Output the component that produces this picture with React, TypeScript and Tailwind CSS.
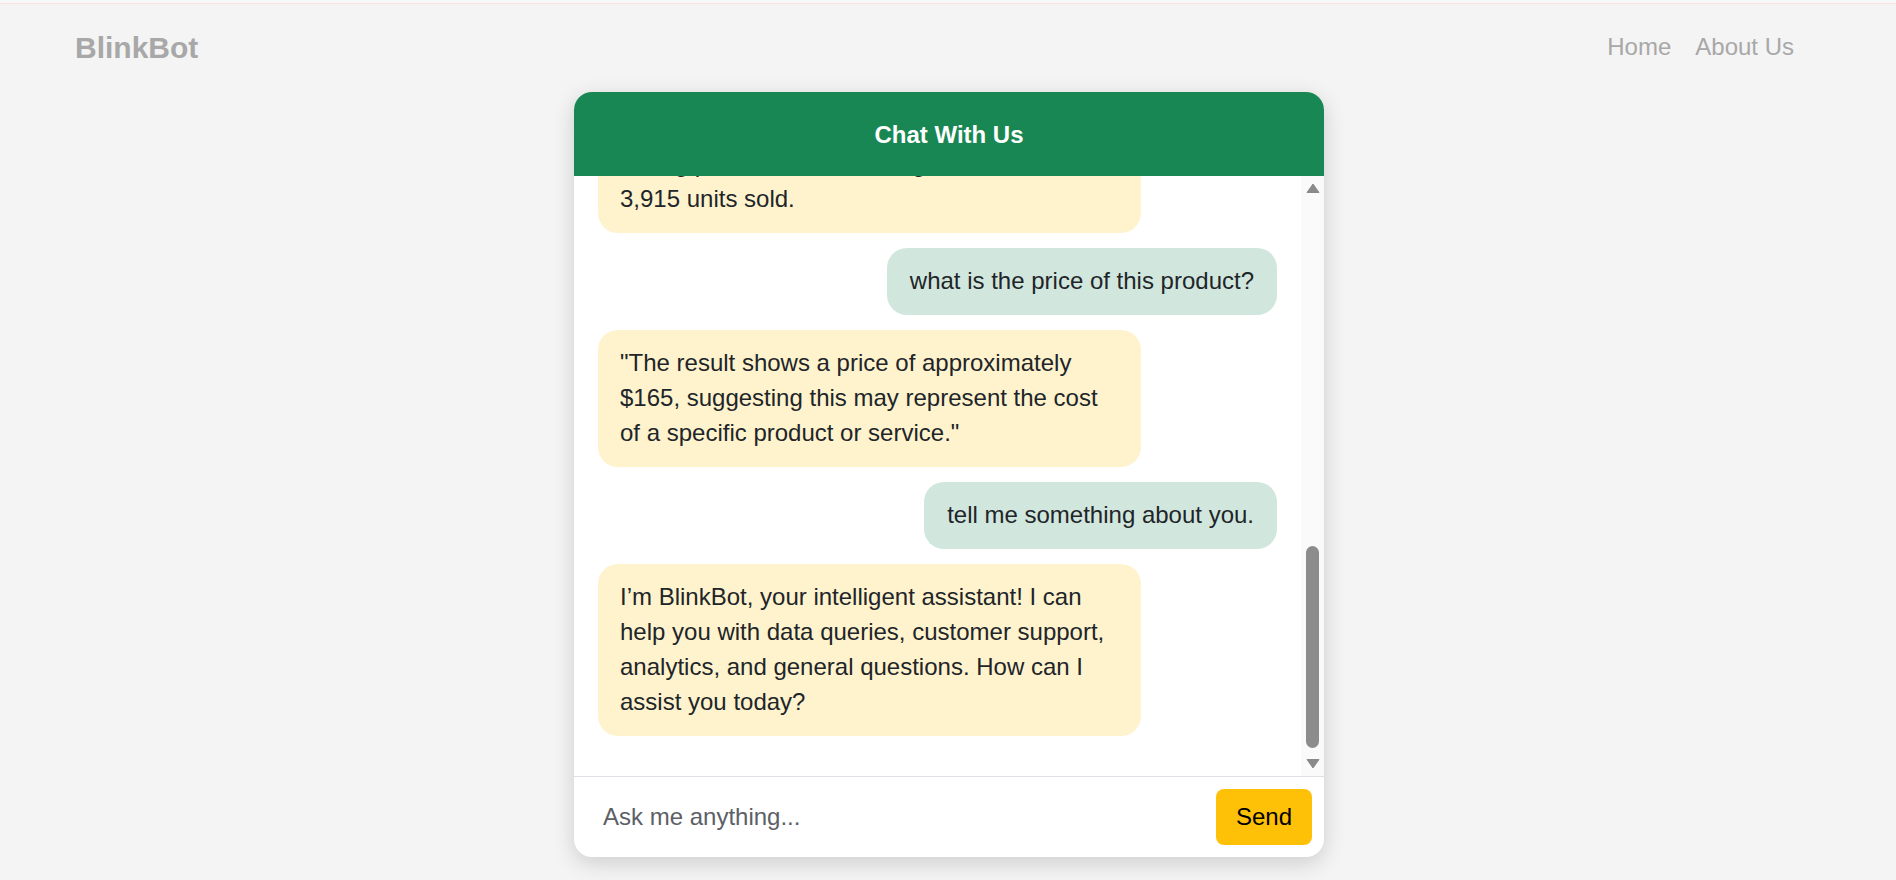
import React from 'react';

type Message = {
    id: number;
    from: 'bot' | 'user';
    text: React.ReactNode;
};

const messages: Message[] = [
    {
        id: 1,
        from: 'bot',
        text: (
            <>
                According to the latest quarterly sales report across all regions and stores, the best-
                <br />
                selling product in our catalog has a total of
                <br />
                3,915 units sold.
            </>
        )
    },
    { id: 2, from: 'user', text: 'what is the price of this product?' },
    {
        id: 3,
        from: 'bot',
        text: '"The result shows a price of approximately $165, suggesting this may represent the cost of a specific product or service."'
    },
    { id: 4, from: 'user', text: 'tell me something about you.' },
    {
        id: 5,
        from: 'bot',
        text: 'I’m BlinkBot, your intelligent assistant! I can help you with data queries, customer support, analytics, and general questions. How can I assist you today?'
    }
];

function ScrollBar() {
    return (
        <div className="w-[23px] flex-shrink-0 bg-[#fafafa] flex flex-col items-center pt-[7px] pb-[7px]">
            <svg width="14" height="10" viewBox="0 0 14 10">
                <path d="M7 1 L13 9.5 L1 9.5 Z" fill="#8a8a8a" strokeLinejoin="round" stroke="#8a8a8a" strokeWidth="1" />
            </svg>
            <div className="flex-1 flex flex-col justify-end pb-[11px]">
                <div className="w-[13px] h-[202px] rounded-full bg-[#8c8c8c]" />
            </div>
            <svg width="14" height="10" viewBox="0 0 14 10">
                <path d="M1 0.5 L13 0.5 L7 9 Z" fill="#8a8a8a" strokeLinejoin="round" stroke="#8a8a8a" strokeWidth="1" />
            </svg>
        </div>
    );
}

export default function App() {
    return (
        <div
            className="min-h-screen bg-[#f4f4f4] text-[#212529]"
            style={{ fontFamily: '"Liberation Sans", Arial, sans-serif' }}
        >
            {/* Top strip */}
            <div className="h-[4px] bg-[#f8f8f8] border-b border-[#fbe4dc]" />

            {/* Navbar */}
            <nav className="h-[86px] flex items-center justify-between pl-[75px] pr-[102px]">
                <span className="text-[30px] font-bold text-[#a8a8a8]">BlinkBot</span>
                <div className="flex items-center gap-6 text-[24px] text-[#a8a8a8]">
                    <a>Home</a>
                    <a>About Us</a>
                </div>
            </nav>

            {/* Chat card */}
            <div className="mx-auto mt-[2px] w-[750px] translate-x-[1px] rounded-[18px] bg-white overflow-hidden shadow-[0_6px_22px_rgba(0,0,0,0.16)]">
                {/* Header */}
                <div className="h-[84px] bg-[#198754] flex items-center justify-center pt-[1px]">
                    <h2 className="text-[24px] font-bold text-white">Chat With Us</h2>
                </div>

                {/* Messages */}
                <div className="flex h-[600px]">
                    <div className="flex-1 min-w-0 flex flex-col justify-end gap-[15px] overflow-hidden px-6 pb-10">
                        {messages.map((m) => (
                            <div
                                key={m.id}
                                className={
                                    m.from === 'bot'
                                        ? 'self-start max-w-[80%] flex-shrink-0 rounded-[20px] bg-[#fff3cd] px-[22px] pt-[15px] pb-[17px] text-[24px] leading-[35px]'
                                        : 'self-end max-w-[80%] flex-shrink-0 rounded-[20px] bg-[#d1e7dd] px-[23px] pt-[15px] pb-[17px] text-[24px] leading-[35px]'
                                }
                            >
                                {m.text}
                            </div>
                        ))}
                    </div>
                    <ScrollBar />
                </div>

                {/* Input */}
                <div className="border-t border-[#dee2e6] p-3 flex items-center gap-3">
                    <input
                        type="text"
                        placeholder="Ask me anything..."
                        className="flex-1 min-w-0 h-[56px] pl-[17px] text-[24px] bg-transparent outline-none placeholder:text-[#5c6066]"
                    />
                    <button className="h-[56px] w-[96px] rounded-lg bg-[#ffc107] text-[24px] text-black">
                        Send
                    </button>
                </div>
            </div>
        </div>
    );
}
